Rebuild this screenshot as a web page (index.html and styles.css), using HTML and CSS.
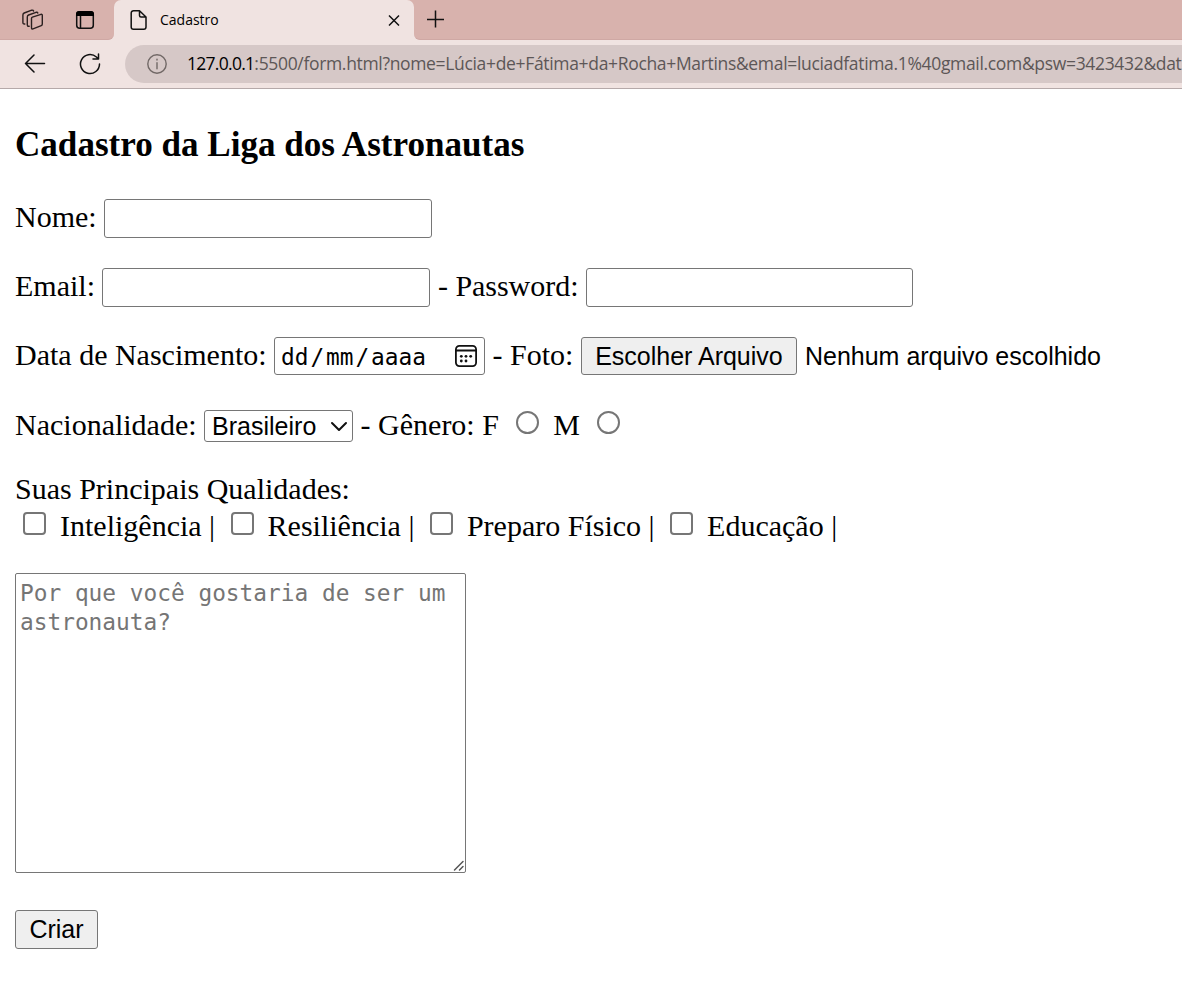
FILE: index.html
```html
<!DOCTYPE html>
<html lang="pt-BR">
<head>
<meta charset="utf-8">
<title>Cadastro</title>
<link rel="stylesheet" href="styles.css">
</head>
<body>
<header class="browser">
  <div class="tabstrip">
    <div class="tools">
      <svg class="workspaces" width="24" height="24" viewBox="0 0 24 24"><path d="M10.500 10.500 Q10.500 9.600 11.400 9.200 L20 6.300 Q21.300 6 21.300 7.400 V16 Q21.300 17.200 20.300 17.600 L12 20.900 Q10.500 21.300 10.500 19.800 Z"/><path d="M8.200 18.200 Q6.300 18.700 6.300 16.800 V9 Q6.300 7.600 7.600 7 L15 4.300 Q16.500 3.900 16.800 5"/><path d="M3.800 16 Q1.900 16.300 1.900 14.500 V6.900 Q1.900 5.600 3.200 5 L10.700 2.200 Q12.200 1.800 12.600 3"/></svg>
      <svg class="tabmenu" width="20" height="20" viewBox="0 0 20 20"><rect x="1.7" y="1.7" width="16.6" height="16.6" rx="3"/><path d="M5.5 6v12"/><path class="solid" d="M1 6V4a3 3 0 0 1 3-3h12a3 3 0 0 1 3 3v2z"/></svg>
    </div>
    <div class="tab">
      <svg class="page-icon" width="18" height="22" viewBox="0 0 18 22"><path d="M3.5 1.7H9.5L16 8V18a2.3 2.3 0 0 1-2.3 2.3H3.500A2.300 2.300 0 0 1 1.200 18V4a2.300 2.300 0 0 1 2.300-2.300zM9.500 1.700V6.500A1.500 1.500 0 0 0 11 8h5"/></svg>
      <span class="tab-title">Cadastro</span>
      <svg class="close" width="12" height="12" viewBox="0 0 12 12"><path d="M1 1.500l10 10M11 1.500L1 11.500"/></svg>
    </div>
    <svg class="plus" width="18" height="18" viewBox="0 0 18 18"><path d="M8.500 .5v17M0 9.500h17"/></svg>
    <div class="strip-shade"></div>
  </div>
  <div class="toolbar">
    <svg class="back" width="22" height="20" viewBox="0 0 22 20"><path d="M20.500 9.500H1.500M10 1L1.500 9.500l8.500 8.500"/></svg>
    <svg class="reload" width="22" height="22" viewBox="0 0 22 22"><path d="M20.500 11A9.500 9.500 0 1 1 17.400 4L19.500 6M19.500 1v5h-5.500"/></svg>
    <div class="address">
      <svg class="info" width="20" height="20" viewBox="0 0 20 20"><circle cx="10" cy="10" r="9.2"/><path d="M10 8.700v6M10 5.100v1"/></svg>
      <div class="url"><span class="host">127.0.0.1</span><span class="path">:5500/form.html?nome=Lúcia+de+Fátima+da+Rocha+Martins&amp;emal=luciadfatima.1%40gmail.com&amp;psw=3423432&amp;dat</span></div>
    </div>
  </div>
</header>
<main class="page">
  <h3 class="title">Cadastro da Liga dos Astronautas</h3>
  <form class="form">
    <div class="row"><label class="text">Nome: </label><input class="field" type="text"></div>
    <div class="row"><label class="text">Email: </label><input class="field" type="text"><label class="text password-label"> - Password: </label><input class="field password" type="password"></div>
    <div class="row row-date">
      <span class="text">Data de Nascimento: </span><div class="date"><span class="date-text">dd<i class="slash">/</i>mm<i class="slash">/</i>aaaa</span><svg class="calendar" width="24" height="24" viewBox="0 0 24 24"><rect x="1.900" y="1.900" width="20.200" height="20.200" rx="3.500"/><path d="M2 6.500h20"/><g class="dots"><circle cx="12" cy="12.300" r="1.400"/><circle cx="7.300" cy="12.300" r="1.400"/><circle cx="16.700" cy="12.300" r="1.400"/><circle cx="7.300" cy="17" r="1.400"/><circle cx="12" cy="17" r="1.400"/></g></svg></div><span class="text"> - Foto: </span><button class="button file" type="button">Escolher Arquivo</button><span class="file-name">Nenhum arquivo escolhido</span>
    </div>
    <div class="row row-select">
      <span class="text">Nacionalidade: </span><div class="select"><span>Brasileiro</span><svg width="18" height="12" viewBox="0 0 18 12"><path d="M2 3l7 7L16 3"/></svg></div><span class="text"> - Gênero: F </span><input class="radio" type="radio" name="genero"><span class="text"> M </span><input class="radio" type="radio" name="genero">
    </div>
    <div class="qualities">
      <div class="text">Suas Principais Qualidades:</div>
      <div class="checks"><input class="check" type="checkbox"><span class="text"> Inteligência | </span><input class="check" type="checkbox"><span class="text"> Resiliência | </span><input class="check" type="checkbox"><span class="text"> Preparo Físico | </span><input class="check" type="checkbox"><span class="text"> Educação |</span></div>
    </div>
    <div class="area">
      <div class="area-text">Por que você gostaria de ser um astronauta?</div>
      <svg class="grip" width="12" height="12" viewBox="0 0 12 12"><path d="M1.500 10L10 1.500M6.500 10l3.500-3.500"/></svg>
    </div>
    <button class="button create" type="button">Criar</button>
  </form>
</main>
</body>
</html>
```
FILE: styles.css
```css
* { box-sizing: border-box; }
body { margin: 0; width: 1182px; height: 993px; overflow: hidden; background: #fff; color: #000; font-family: "Liberation Serif", serif; }
svg { display: block; flex: none; fill: none; stroke: #111; stroke-width: 1.5; stroke-linecap: round; stroke-linejoin: round; }

.browser { height: 89px; background: #f0e3e1; border-bottom: 1px solid #b5a9a9; font-family: "Open Sans", sans-serif; }
.tabstrip { position: relative; display: flex; height: 40px; background: #f0e3e1; }
.tools { display: flex; align-items: center; width: 114px; height: 40px; padding-left: 21px; background: #d8b2ad; border-bottom: 1px solid #cfa8a4; border-radius: 0 0 6px 0; }
.workspaces { stroke-width: 1.4; stroke: #2b2020; }
.tabmenu { margin-left: 30px; }
.tabmenu .solid { fill: #000; stroke: none; }
.tab { display: flex; align-items: center; width: 300px; height: 40px; padding: 0 14px 0 16px; background: #f0e3e1; border-radius: 7px 7px 0 0; box-shadow: 0 -8px 0 #d8b2ad; }
.tab-title { margin-left: 12px; font-size: 14px; line-height: 20px; }
.close { margin-left: auto; stroke-linecap: butt; }
.plus { position: absolute; z-index: 2; left: 427px; top: 10px; stroke-linecap: butt; }
.strip-shade { flex: 1; background: #d8b2ad; border-bottom: 1px solid #cfa8a4; border-radius: 0 0 0 6px; }
.toolbar { display: flex; align-items: center; height: 48px; background: #f0e3e1; }
.back { margin-left: 24px; }
.reload { margin-left: 33px; }
.address { display: flex; align-items: center; flex: 1; min-width: 0; height: 38px; margin-left: 24px; padding-left: 22px; background: #d6c8c7; border-radius: 19px 0 0 19px; }
.info { stroke: #716866; stroke-width: 1.4; }
.url { margin-left: 20px; padding-bottom: 2px; font-size: 17.5px; line-height: 24px; letter-spacing: -0.33px; white-space: nowrap; }
.host { letter-spacing: -0.72px; }
.path { color: #5d5757; }

.page { padding: 0 15px; font-size: 30px; }
.title { margin: 0; padding-top: 36px; font-size: 35.1px; line-height: 40px; font-weight: bold; }
.form { padding-top: 34px; }
.row { display: flex; align-items: center; height: 39px; margin-bottom: 30px; }
.text { white-space: pre; line-height: 36px; flex: none; }
.row .text { padding-bottom: 3px; }
.field { appearance: none; flex: none; width: 328px; height: 39px; margin: 0; padding: 2px 4px; border: 1px solid #767676; border-radius: 3px; font: 25px "Liberation Sans", sans-serif; }
.password-label { letter-spacing: -0.03px; }
.password { width: 327px; }
.row-date { height: 38px; margin-bottom: 35px; }
.date { display: flex; align-items: center; justify-content: space-between; width: 211px; height: 38px; padding: 0 6px; border: 1px solid #767676; border-radius: 3px; }
.date-text { padding-top: 2px; font: 22.8px/30px "DejaVu Sans Mono", monospace; white-space: nowrap; }
.slash { padding: 0 1.9px; font-style: normal; }
.calendar { stroke-width: 1.8; }
.dots { fill: #111; stroke: none; }
.button { margin: 0; padding: 0; border: 1px solid #767676; border-radius: 3px; background: #efefef; color: #000; font: 25px/36px "Liberation Sans", sans-serif; text-align: center; white-space: nowrap; }
.file { width: 216px; height: 38px; }
.file-name { margin-left: 8px; font: 25px/38px "Liberation Sans", sans-serif; white-space: nowrap; }
.row-select { height: 32px; margin-bottom: 28px; }
.select { display: flex; align-items: center; justify-content: space-between; width: 149px; height: 32px; padding: 0 4px 0 7px; border: 1px solid #767676; border-radius: 3px; font: 25px/30px "Liberation Sans", sans-serif; }
.select svg { stroke-width: 2; }
.radio, .check { appearance: none; flex: none; width: 23px; height: 23px; border: 2px solid #767676; background: #fff; }
.radio { margin: 0 6.4px 7px 10px; border-radius: 50%; }
.check { margin: 0 6.500px 4px 8px; border-radius: 4px; }
.qualities .text { line-height: 37px; }
.checks { display: flex; align-items: center; height: 37px; }
.area { position: relative; width: 451px; height: 300px; margin-top: 29px; padding: 5px 4px 4px; border: 1px solid #767676; border-radius: 2px; }
.area-text { color: #757575; font: 22.8px/29px "DejaVu Sans Mono", monospace; }
.grip { position: absolute; right: 0; bottom: 0; stroke: #555; }
.create { display: block; width: 83px; height: 39px; margin-top: 37px; padding-bottom: 2px; }
```
